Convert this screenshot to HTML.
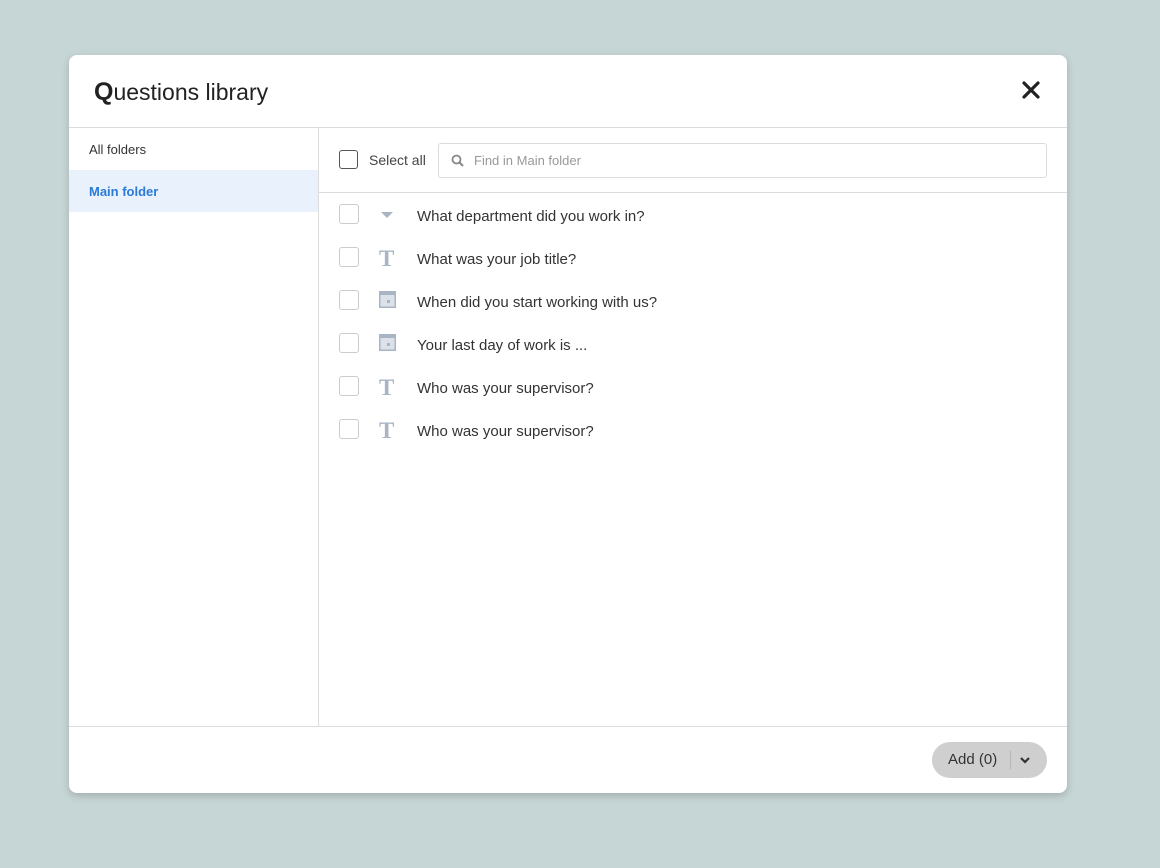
<!DOCTYPE html>
<html><head><style>
body{margin:0;width:1160px;height:868px;background:#c6d5d5;font-family:"Liberation Sans",sans-serif;position:relative;overflow:hidden}
.m{position:absolute;left:69px;top:55px;width:998px;height:738px;background:#fff;border-radius:8px;box-shadow:0 3px 8px rgba(0,0,0,.18)}
.h{position:absolute;left:25px;top:23px;font-size:23px;color:#222}
.h b{font-size:25px}
.x{position:absolute;right:26px;top:25px}
.hl{position:absolute;left:0;right:0;top:72px;border-top:1px solid #dcdcdc}
.sb{position:absolute;left:0;top:73px;width:249px;height:598px;border-right:1px solid #dcdcdc}
.sb div{height:42px;line-height:44px;padding-left:20px;font-size:13px;color:#333}
.sb .a{background:#e8f1fc;color:#2a7ad6;font-weight:bold}
.tb{position:absolute;left:250px;right:0;top:73px;height:64px;border-bottom:1px solid #dcdcdc}
.cb{position:absolute;width:18px;height:18px;border:1px solid #ccc;border-radius:3px}
.fl{position:absolute;left:0;right:0;top:671px;border-top:1px solid #dcdcdc}
.r{position:absolute;left:270px;height:22px}
.r span{position:absolute;left:78px;top:4px;font-size:15px;color:#333;white-space:nowrap}
.r span.t{left:40px;top:-1px;font-family:'Liberation Serif',serif;font-size:23px;font-weight:bold;color:#a9b5c4}
.btn{position:absolute;left:863px;top:687px;width:115px;height:36px;border-radius:18px;background:#cfcfcf;font-size:15px;color:#333}
</style></head><body>
<div class="m">
<div class="h"><b>Q</b>uestions library</div>
<svg class="x" width="20" height="20" viewBox="0 0 20 20"><path d="M3 3L17 17M17 3L3 17" stroke="#222" stroke-width="3.2" stroke-linecap="round"/></svg>
<div class="hl"></div>
<div class="sb"><div>All folders</div><div class="a">Main folder</div></div>
<div class="tb">
<div class="cb" style="left:20px;top:22px;border-color:#555;width:17px;height:17px"></div>
<div style="position:absolute;left:50px;top:24px;font-size:14px;color:#444">Select all</div>
<div style="position:absolute;left:119px;top:15px;width:607px;height:33px;border:1px solid #dcdcdc;border-radius:3px">
<svg style="position:absolute;left:12px;top:10px" width="13" height="13" viewBox="0 0 13 13"><circle cx="5.5" cy="5.5" r="4" fill="none" stroke="#888" stroke-width="1.8"/><path d="M8.5 8.5L12 12" stroke="#888" stroke-width="2"/></svg>
<div style="position:absolute;left:35px;top:9px;font-size:13px;color:#999">Find in Main folder</div></div>
</div>
<div class="r" style="top:149px"><div class="cb" style="top:0;left:0"></div><svg style="position:absolute;left:41px;top:7px" width="14" height="8"><path d="M1 1H13L7 7Z" fill="#a9b5c4"/></svg><span>What department did you work in?</span></div>
<div class="r" style="top:192px"><div class="cb" style="top:0;left:0"></div><span class="t">T</span><span>What was your job title?</span></div>
<div class="r" style="top:235px"><div class="cb" style="top:0;left:0"></div><svg style="position:absolute;left:40px;top:1px" width="17" height="17"><rect x="0" y="0" width="17" height="17" fill="#a9b5c4"/><rect x="1.5" y="4" width="14" height="11.5" fill="#dde2e9"/><rect x="8" y="9" width="3" height="3" fill="#a9b5c4"/></svg><span>When did you start working with us?</span></div>
<div class="r" style="top:278px"><div class="cb" style="top:0;left:0"></div><svg style="position:absolute;left:40px;top:1px" width="17" height="17"><rect x="0" y="0" width="17" height="17" fill="#a9b5c4"/><rect x="1.5" y="4" width="14" height="11.5" fill="#dde2e9"/><rect x="8" y="9" width="3" height="3" fill="#a9b5c4"/></svg><span>Your last day of work is ...</span></div>
<div class="r" style="top:321px"><div class="cb" style="top:0;left:0"></div><span class="t">T</span><span>Who was your supervisor?</span></div>
<div class="r" style="top:364px"><div class="cb" style="top:0;left:0"></div><span class="t">T</span><span>Who was your supervisor?</span></div>
<div class="fl"></div>
<div class="btn"><span style="position:absolute;left:16px;top:9px">Add (0)</span><div style="position:absolute;left:78px;top:9px;height:18px;border-left:1px solid #b5b5b5"></div><svg style="position:absolute;left:87px;top:14px" width="12" height="8"><path d="M2 2L6 6L10 2" fill="none" stroke="#333" stroke-width="2.2"/></svg></div>
</div>
</body></html>
